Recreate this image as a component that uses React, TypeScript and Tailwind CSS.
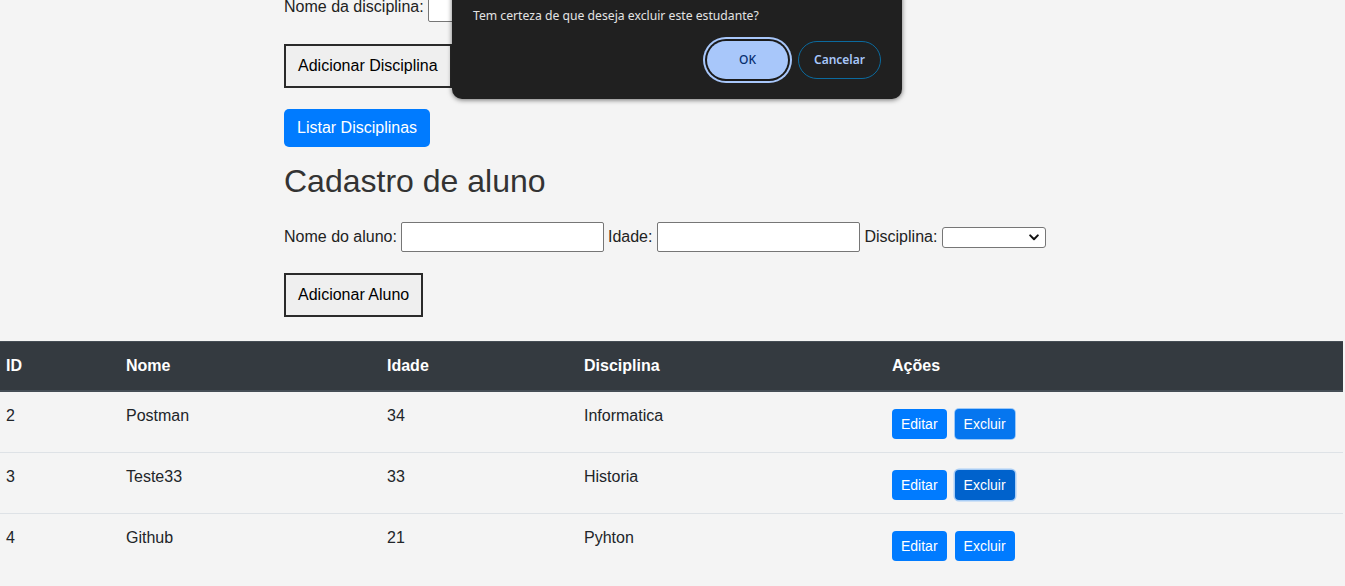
import React from "react";

const rows = [
  { id: "2", nome: "Postman", idade: "34", disc: "Informatica", ex: "hover" },
  { id: "3", nome: "Teste33", idade: "33", disc: "Historia", ex: "focus" },
  { id: "4", nome: "Github", idade: "21", disc: "Pyhton", ex: "" },
];

function Chevron() {
  return (
    <svg width="10" height="7" viewBox="0 0 10 7" fill="none">
      <path d="M1.2 1.4 L5 5.2 L8.8 1.4" stroke="#111" strokeWidth="2" strokeLinecap="round" strokeLinejoin="round" />
    </svg>
  );
}

export default function App() {
  return (
    <div
      className="relative w-[1345px] h-[586px] overflow-hidden bg-[#f4f4f4] text-[#222]"
      style={{ fontFamily: '"Liberation Sans", Arial, sans-serif' }}
    >
      <div className="mt-[-8px] flex flex-col items-start pl-[284px]">
        <div className="flex items-center h-[30px] gap-[4px] text-[16px]">
          <span>Nome da disciplina:</span>
          <div className="w-[203px] h-[30px] bg-white border border-[#767676] rounded-[2px]" />
        </div>
        <button className="mt-[22px] h-[44px] px-[12px] border-2 border-[#2a2a2a] bg-[#efefef] text-[16px] text-black">
          Adicionar Disciplina
        </button>
        <button className="mt-[21px] h-[38px] px-[13px] rounded-[5px] bg-[#007bff] text-white text-[16px]">
          Listar Disciplinas
        </button>
        <h1 className="mt-[16px] text-[32px] leading-[37px] font-normal text-[#333]">Cadastro de aluno</h1>
        <div className="mt-[22px] flex items-center h-[30px] gap-[4px] text-[16px]">
          <span>Nome do aluno:</span>
          <div className="w-[203px] h-[30px] bg-white border border-[#767676] rounded-[2px]" />
          <span className="mr-[1px]">Idade:</span>
          <div className="w-[203px] h-[30px] bg-white border border-[#767676] rounded-[2px]" />
          <span className="mr-[1px]">Disciplina:</span>
          <div className="w-[104px] h-[21px] bg-white border border-[#767676] rounded-[3px] flex items-center justify-end pr-[6px]">
            <Chevron />
          </div>
        </div>
        <button className="mt-[21px] h-[44px] px-[12px] border-2 border-[#2a2a2a] bg-[#efefef] text-[16px] text-black">
          Adicionar Aluno
        </button>
      </div>

      <div className="mt-[24px] w-[1343px]">
        <div className="flex h-[51px] bg-[#343a40] border-t border-[#454d55] border-b-2 border-b-[#454d55] text-white font-bold text-[16px]">
          <div className="w-[120px] pl-[6px] pt-[12px] leading-[24px]">ID</div>
          <div className="w-[261px] pl-[6px] pt-[12px] leading-[24px]">Nome</div>
          <div className="w-[197px] pl-[6px] pt-[12px] leading-[24px]">Idade</div>
          <div className="w-[308px] pl-[6px] pt-[12px] leading-[24px]">Disciplina</div>
          <div className="flex-1 pl-[6px] pt-[12px] leading-[24px]">Ações</div>
        </div>
        {rows.map((r, i) => (
          <div
            key={r.id}
            className={
              "flex h-[60px] text-[16px] text-[#212529] box-content " +
              (i > 0 ? "border-t border-[#dee2e6]" : "")
            }
          >
            <div className="w-[120px] pl-[6px] pt-[12px] leading-[24px]">{r.id}</div>
            <div className="w-[261px] pl-[6px] pt-[12px] leading-[24px]">{r.nome}</div>
            <div className="w-[197px] pl-[6px] pt-[12px] leading-[24px]">{r.idade}</div>
            <div className="w-[308px] pl-[6px] pt-[12px] leading-[24px]">{r.disc}</div>
            <div className="flex-1 pl-[6px] pt-[17px] flex items-start gap-[8px]">
              <button className="h-[30px] px-[9px] rounded-[4px] bg-[#007bff] text-white text-[14px]">Editar</button>
              {r.ex === "focus" ? (
                <button className="h-[30px] px-[9px] rounded-[4px] bg-[#0062cc] text-white text-[14px] shadow-[0_0_0_1.5px_#a9cdf5]">
                  Excluir
                </button>
              ) : r.ex === "hover" ? (
                <button className="h-[30px] px-[9px] rounded-[4px] bg-[#0676ef] text-white text-[14px] shadow-[0_0_0_1px_#9cc8f7]">
                  Excluir
                </button>
              ) : (
                <button className="h-[30px] px-[9px] rounded-[4px] bg-[#007bff] text-white text-[14px]">Excluir</button>
              )}
            </div>
          </div>
        ))}
      </div>

      <div
        className="absolute left-[452px] top-[-40px] w-[450px] bg-[#202020] rounded-[10px] shadow-[0_1px_5px_rgba(0,0,0,0.55)] pt-[48px] pl-[21px] pr-[21px] pb-[20px] flex flex-col"
        style={{ fontFamily: '"Noto Sans", "Open Sans", sans-serif' }}
      >
        <div className="text-[12.2px] leading-[16px] text-[#e3e3e3]">Tem certeza de que deseja excluir este estudante?</div>
        <div className="mt-[17px] flex justify-end gap-[10px]">
          <button className="w-[81px] h-[38px] rounded-full bg-[#a8c7fa] text-[#062e6f] text-[12px] font-medium shadow-[0_0_0_2px_#1a1a1a,0_0_0_4px_#a8c7fa]">
            OK
          </button>
          <button className="w-[83px] h-[38px] rounded-full border border-[#0b6a9e] text-[#a8c7fa] text-[12px] font-semibold">
            Cancelar
          </button>
        </div>
      </div>
    </div>
  );
}
